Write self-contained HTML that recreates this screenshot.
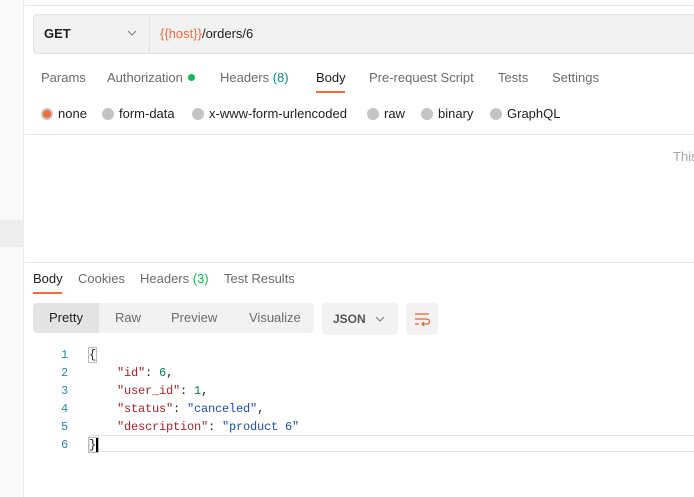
<!DOCTYPE html><html><head><style>
*{margin:0;padding:0;box-sizing:border-box}
body{width:694px;height:497px;overflow:hidden;background:#fff;font-family:"Liberation Sans",Arial,sans-serif;font-size:13px;color:#6b6b6b;position:relative}
.a{position:absolute;white-space:nowrap}
.dot{position:absolute;width:12px;height:12px;border-radius:50%;background:#c4c4c4}
.mono{font-family:"Liberation Mono","DejaVu Sans Mono",monospace;font-size:12px}
</style></head><body>
<div class="a" style="left:0;top:0;width:24px;height:497px;background:#f9f9f9;border-right:1px solid #ececec"></div>
<div class="a" style="left:0;top:220px;width:24px;height:27px;background:#ededed"></div>
<div class="a" style="left:25px;top:5px;width:669px;height:1px;background:#e6e6e6"></div>
<div class="a" style="left:33px;top:14px;width:670px;height:40px;background:#f2f2f2;border:1px solid #e2e2e2;border-radius:4px"></div>
<div class="a" style="left:149px;top:15px;width:1px;height:38px;background:#e2e2e2"></div>
<div class="a" style="left:44px;top:26px;font-weight:bold;color:#212121">GET</div>
<svg class="a" style="left:127px;top:30px" width="10" height="7"><path d="M1 1L5 5L9 1" stroke="#777" fill="none"/></svg>
<div class="a" style="left:160px;top:26px;color:#212121"><span style="color:#f26b3a">{{host}}</span>/orders/6</div>
<div class="a" style="left:41px;top:70px">Params</div>
<div class="a" style="left:107px;top:70px">Authorization</div>
<div class="a" style="left:188px;top:74px;width:7px;height:7px;border-radius:50%;background:#0cbb52"></div>
<div class="a" style="left:220px;top:70px">Headers <span style="color:#0a8f8a">(8)</span></div>
<div class="a" style="left:316px;top:70px;color:#212121">Body</div>
<div class="a" style="left:316px;top:91px;width:29px;height:2px;background:#f26b3a"></div>
<div class="a" style="left:369px;top:70px">Pre-request Script</div>
<div class="a" style="left:498px;top:70px">Tests</div>
<div class="a" style="left:552px;top:70px">Settings</div>
<div class="dot" style="left:41px;top:108px;background:#f26b3a;border:2px solid #c4c4c4"></div>
<div class="a" style="left:58px;top:106px;color:#212121">none</div>
<div class="dot" style="left:102px;top:108px"></div><div class="a" style="left:119px;top:106px;color:#212121">form-data</div>
<div class="dot" style="left:192px;top:108px"></div><div class="a" style="left:209px;top:106px;color:#212121">x-www-form-urlencoded</div>
<div class="dot" style="left:367px;top:108px"></div><div class="a" style="left:384px;top:106px;color:#212121">raw</div>
<div class="dot" style="left:421px;top:108px"></div><div class="a" style="left:438px;top:106px;color:#212121">binary</div>
<div class="dot" style="left:490px;top:108px"></div><div class="a" style="left:507px;top:106px;color:#212121">GraphQL</div>
<div class="a" style="left:25px;top:134px;width:669px;height:1px;background:#e6e6e6"></div>
<div class="a" style="left:673px;top:149px;color:#a6a6a6">This</div>
<div class="a" style="left:25px;top:262px;width:669px;height:1px;background:#e6e6e6"></div>
<div class="a" style="left:33px;top:271px;color:#212121">Body</div>
<div class="a" style="left:33px;top:292px;width:29px;height:2px;background:#f26b3a"></div>
<div class="a" style="left:78px;top:271px">Cookies</div>
<div class="a" style="left:140px;top:271px">Headers <span style="color:#0cbb52">(3)</span></div>
<div class="a" style="left:224px;top:271px">Test Results</div>
<div class="a" style="left:33px;top:303px;width:281px;height:30px;background:#f2f2f2;border-radius:4px"></div>
<div class="a" style="left:33px;top:303px;width:66px;height:30px;background:#e4e4e4;border-radius:4px 0 0 4px"></div>
<div class="a" style="left:49px;top:310px;color:#212121">Pretty</div>
<div class="a" style="left:115px;top:310px">Raw</div>
<div class="a" style="left:171px;top:310px">Preview</div>
<div class="a" style="left:249px;top:310px">Visualize</div>
<div class="a" style="left:322px;top:303px;width:76px;height:32px;background:#f2f2f2;border-radius:4px"></div>
<div class="a" style="left:333px;top:312px;font-size:12px;font-weight:bold;color:#555">JSON</div>
<svg class="a" style="left:375px;top:316px" width="10" height="7"><path d="M1 1L5 5L9 1" stroke="#777" fill="none"/></svg>
<div class="a" style="left:406px;top:303px;width:32px;height:32px;background:#f2f2f2;border-radius:4px"></div>
<svg class="a" style="left:414px;top:311px" width="16" height="16"><path d="M1 3H15M1 8H13a2.5 2.5 0 0 1 0 5H8M10 11L8 13L10 15M1 13H5" stroke="#e0612e" fill="none" stroke-width="1.2"/></svg>
<div class="a" style="left:89px;top:435px;width:605px;height:17px;border:1px solid #e4e4e4;border-right:none"></div>
<div class="a mono" style="left:61px;top:346px;line-height:18px;color:#2a86a8;text-align:right">1<br>2<br>3<br>4<br>5<br>6</div>
<div class="a mono" style="left:89px;top:346px;line-height:18px;color:#212121;letter-spacing:-0.2px"><span style="outline:1px solid #bbb">{</span><br>&nbsp;&nbsp;&nbsp;&nbsp;<span style="color:#a3242c">"id"</span>: <span style="color:#0b7c5a">6</span>,<br>&nbsp;&nbsp;&nbsp;&nbsp;<span style="color:#a3242c">"user_id"</span>: <span style="color:#0b7c5a">1</span>,<br>&nbsp;&nbsp;&nbsp;&nbsp;<span style="color:#a3242c">"status"</span>: <span style="color:#1f4fa8">"canceled"</span>,<br>&nbsp;&nbsp;&nbsp;&nbsp;<span style="color:#a3242c">"description"</span>: <span style="color:#1f4fa8">"product 6"</span><br><span style="outline:1px solid #bbb;border-right:2px solid #000">}</span></div>
</body></html>
